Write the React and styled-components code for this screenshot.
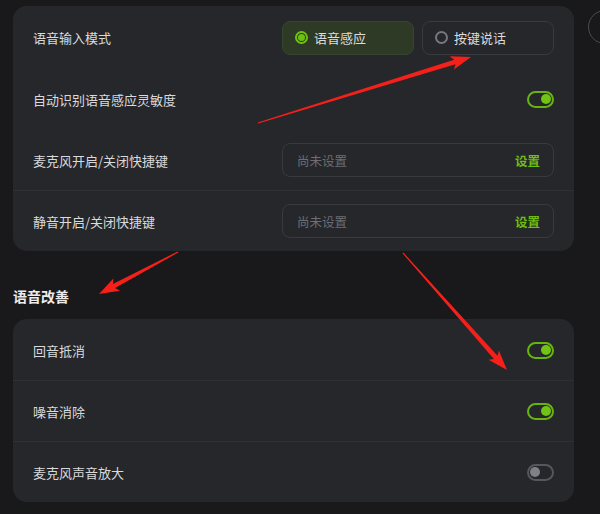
import React from 'react';
import styled, { createGlobalStyle } from 'styled-components';

const GlobalStyle = createGlobalStyle`
  html, body {
    margin: 0;
    padding: 0;
    background: #19191b;
    overflow: hidden;
  }
  body {
    font-family: 'Noto Sans CJK SC', 'Noto Sans', sans-serif;
    color: #d8d8da;
  }
`;

const Page = styled.div`
  position: relative;
  width: 600px;
  height: 514px;
  display: flex;
  gap: 14px;
  padding: 6px 0 0 13px;
  box-sizing: border-box;
`;

const Main = styled.div`
  width: 561px;
  flex-shrink: 0;
  display: flex;
  flex-direction: column;
`;

const Rail = styled.div`
  flex-shrink: 0;
  padding-top: 4px;
`;

const RoundButton = styled.div`
  width: 32px;
  height: 32px;
  border-radius: 50%;
  border: 1px solid #4a4b50;
`;

const Card = styled.div`
  background: #26272b;
  border-radius: 14px;
  overflow: hidden;
`;

const Row = styled.div`
  height: ${(p) => p.$h || 61}px;
  display: flex;
  align-items: center;
  justify-content: space-between;
  padding: 0 20px;
  border-top: 1px solid ${(p) => (p.$divider ? '#2f3034' : 'transparent')};
  box-sizing: border-box;
`;

const Label = styled.span`
  font-size: 13px;
  color: #dadadc;
`;

const SectionTitle = styled.h3`
  margin: 0;
  height: 68px;
  box-sizing: border-box;
  padding-top: 35px;
  line-height: 20px;
  font-size: 14px;
  font-weight: 700;
  color: #ececee;
`;

const RadioGroup = styled.div`
  display: flex;
  gap: 8px;
`;

const RadioOption = styled.div`
  width: 132px;
  height: 34px;
  box-sizing: border-box;
  border-radius: 8px;
  display: flex;
  align-items: center;
  gap: 6px;
  padding: 0 12px;
  font-size: 13px;
  color: #dcdcde;
  background: ${(p) => (p.$active ? '#2e3a25' : 'transparent')};
  border: 1px solid ${(p) => (p.$active ? '#374430' : '#393a3f')};
`;

const RadioDot = styled.span`
  width: 13px;
  height: 13px;
  box-sizing: border-box;
  border-radius: 50%;
  border: 2px solid ${(p) => (p.$active ? '#6fc10f' : '#77787d')};
  display: flex;
  align-items: center;
  justify-content: center;

  &::after {
    content: '';
    width: 7px;
    height: 7px;
    border-radius: 50%;
    background: ${(p) => (p.$active ? '#6fc10f' : 'transparent')};
  }
`;

const Toggle = styled.span`
  width: 27px;
  height: 17px;
  box-sizing: border-box;
  border-radius: 9px;
  border: 2px solid ${(p) => (p.$on ? '#67b50c' : '#56575c')};
  display: flex;
  align-items: center;
  justify-content: ${(p) => (p.$on ? 'flex-end' : 'flex-start')};
  padding: 0 1px;

  &::after {
    content: '';
    width: 10px;
    height: 10px;
    border-radius: 50%;
    background: ${(p) => (p.$on ? '#72c414' : '#808186')};
  }
`;

const HotkeyField = styled.div`
  width: 272px;
  height: 34px;
  box-sizing: border-box;
  border-radius: 8px;
  border: 1px solid #393a3f;
  display: flex;
  align-items: center;
  justify-content: space-between;
  padding: 0 13px 0 14px;
  font-size: 12.5px;
`;

const Placeholder = styled.span`
  color: #6d6e73;
`;

const SetLink = styled.span`
  color: #6fbd12;
  font-weight: 700;
`;

const Overlay = styled.svg`
  position: absolute;
  left: 0;
  top: 0;
  pointer-events: none;
`;

function arrowPoints(x1, y1, x2, y2) {
  const dx = x2 - x1;
  const dy = y2 - y1;
  const len = Math.hypot(dx, dy);
  const ux = dx / len;
  const uy = dy / len;
  const nx = -uy;
  const ny = ux;
  const head = 20;
  const bx = x2 - ux * head;
  const by = y2 - uy * head;
  const p = (x, y, w) => [x + nx * w, y + ny * w];
  const pts = [
    p(x1, y1, 0.6),
    p(bx + ux * 3, by + uy * 3, 2.4),
    p(bx, by, 7),
    [x2, y2],
    p(bx, by, -7),
    p(bx + ux * 3, by + uy * 3, -2.4),
    p(x1, y1, -0.6),
  ];
  return pts.map((q) => q.map((v) => v.toFixed(1)).join(',')).join(' ');
}

// red annotation arrows drawn over the screenshot
const arrows = [
  [258, 123, 471, 57],
  [178, 252, 99, 294],
  [403, 253, 507, 370],
];

const HotkeyRow = ({ label, divider }) => (
  <Row $divider={divider}>
    <Label>{label}</Label>
    <HotkeyField>
      <Placeholder>尚未设置</Placeholder>
      <SetLink>设置</SetLink>
    </HotkeyField>
  </Row>
);

const ToggleRow = ({ label, on, divider }) => (
  <Row $divider={divider}>
    <Label>{label}</Label>
    <Toggle $on={on} />
  </Row>
);

export default function App() {
  return (
    <>
      <GlobalStyle />
      <Page>
        <Main>
          <Card>
            <Row $h={62}>
              <Label>语音输入模式</Label>
              <RadioGroup>
                <RadioOption $active>
                  <RadioDot $active />
                  语音感应
                </RadioOption>
                <RadioOption>
                  <RadioDot />
                  按键说话
                </RadioOption>
              </RadioGroup>
            </Row>
            <ToggleRow label="自动识别语音感应灵敏度" on />
            <HotkeyRow label="麦克风开启/关闭快捷键" />
            <HotkeyRow label="静音开启/关闭快捷键" divider />
          </Card>
          <SectionTitle>语音改善</SectionTitle>
          <Card>
            <ToggleRow label="回音抵消" on />
            <ToggleRow label="噪音消除" on divider />
            <ToggleRow label="麦克风声音放大" divider />
          </Card>
        </Main>
        <Rail>
          <RoundButton />
        </Rail>
        <Overlay width="600" height="514" viewBox="0 0 600 514">
          {arrows.map((a, i) => (
            <polygon key={i} points={arrowPoints(...a)} fill="#f5201a" />
          ))}
        </Overlay>
      </Page>
    </>
  );
}
